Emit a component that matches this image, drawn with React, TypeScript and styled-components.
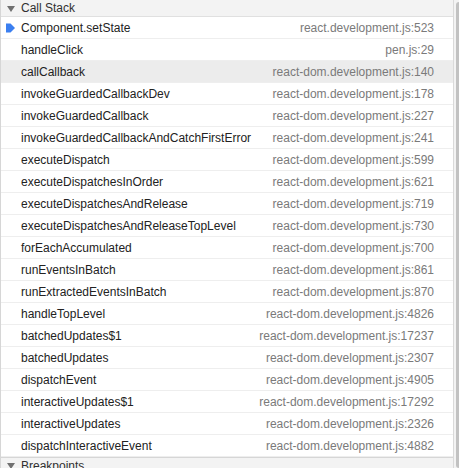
import React from "react";
import styled, { createGlobalStyle } from "styled-components";

const GlobalStyle = createGlobalStyle`
  html, body {
    margin: 0;
    padding: 0;
    background: #ffffff;
    overflow: hidden;
  }
  body {
    font-family: "Liberation Sans", Arial, sans-serif;
  }
`;

type Frame = { name: string; location: string };

const frames: Frame[] = [
  { name: "Component.setState", location: "react.development.js:523" },
  { name: "handleClick", location: "pen.js:29" },
  { name: "callCallback", location: "react-dom.development.js:140" },
  { name: "invokeGuardedCallbackDev", location: "react-dom.development.js:178" },
  { name: "invokeGuardedCallback", location: "react-dom.development.js:227" },
  { name: "invokeGuardedCallbackAndCatchFirstError", location: "react-dom.development.js:241" },
  { name: "executeDispatch", location: "react-dom.development.js:599" },
  { name: "executeDispatchesInOrder", location: "react-dom.development.js:621" },
  { name: "executeDispatchesAndRelease", location: "react-dom.development.js:719" },
  { name: "executeDispatchesAndReleaseTopLevel", location: "react-dom.development.js:730" },
  { name: "forEachAccumulated", location: "react-dom.development.js:700" },
  { name: "runEventsInBatch", location: "react-dom.development.js:861" },
  { name: "runExtractedEventsInBatch", location: "react-dom.development.js:870" },
  { name: "handleTopLevel", location: "react-dom.development.js:4826" },
  { name: "batchedUpdates$1", location: "react-dom.development.js:17237" },
  { name: "batchedUpdates", location: "react-dom.development.js:2307" },
  { name: "dispatchEvent", location: "react-dom.development.js:4905" },
  { name: "interactiveUpdates$1", location: "react-dom.development.js:17292" },
  { name: "interactiveUpdates", location: "react-dom.development.js:2326" },
  { name: "dispatchInteractiveEvent", location: "react-dom.development.js:4882" },
];

const Window = styled.div`
  display: flex;
  width: 459px;
  height: 468px;
  overflow: hidden;
`;

const Panel = styled.div`
  width: 452px;
  flex-shrink: 0;
  border-left: 1px solid #d6d6d6;
  border-right: 1px solid #dadada;
  display: flex;
  flex-direction: column;
`;

const Scrollbar = styled.div`
  flex: 1;
  background: #f3f3f3;
  display: flex;
  justify-content: flex-end;
  padding-top: 2px;
`;

const Thumb = styled.div`
  width: 3px;
  height: 466px;
  background: #c2c2c2;
  border-radius: 3px 0 0 3px;
`;

const SectionHeader = styled.div<{ $top?: boolean }>`
  height: 17px;
  flex-shrink: 0;
  display: flex;
  align-items: center;
  gap: 6px;
  padding-left: 6px;
  background: #f3f3f3;
  border-bottom: 1px solid #e0e0e0;
  border-top: ${(p) => (p.$top ? "none" : "1px solid #d6d6d6")};
  font-size: 12px;
  color: #303030;
  box-sizing: border-box;
  line-height: 16px;
`;

const Caret = styled.span`
  width: 0;
  height: 0;
  border-left: 4px solid transparent;
  border-right: 4px solid transparent;
  border-top: 6px solid #707070;
  margin-top: 1px;
`;

const Row = styled.div<{ $selected?: boolean }>`
  height: 22px;
  flex-shrink: 0;
  box-sizing: border-box;
  display: flex;
  align-items: center;
  position: relative;
  padding: 0 19px 0 20px;
  background: ${(p) => (p.$selected ? "#ececec" : "#ffffff")};
  border-bottom: 1px solid #eeeeee;
  font-size: 12px;
`;

const Name = styled.span`
  flex: 1;
  color: #222222;
  white-space: nowrap;
`;

const Location = styled.span`
  color: #7a7a7a;
  white-space: nowrap;
`;

const Pointer = styled.svg`
  position: absolute;
  left: 4px;
  top: 5px;
`;

const CurrentArrow = () => (
  <Pointer width="11" height="12" viewBox="0 0 11 12">
    <path d="M1 1.5 H5.5 L10 6 L5.5 10.5 H1 Z" fill="#3b7ff0" />
  </Pointer>
);

export default function App() {
  return (
    <Window>
      <GlobalStyle />
      <Panel>
        <SectionHeader $top>
          <Caret />
          Call Stack
        </SectionHeader>
        {frames.map((f, i) => (
          <Row key={f.name} $selected={i === 2}>
            {i === 0 && <CurrentArrow />}
            <Name>{f.name}</Name>
            <Location>{f.location}</Location>
          </Row>
        ))}
        <SectionHeader>
          <Caret />
          Breakpoints
        </SectionHeader>
      </Panel>
      <Scrollbar>
        <Thumb />
      </Scrollbar>
    </Window>
  );
}
